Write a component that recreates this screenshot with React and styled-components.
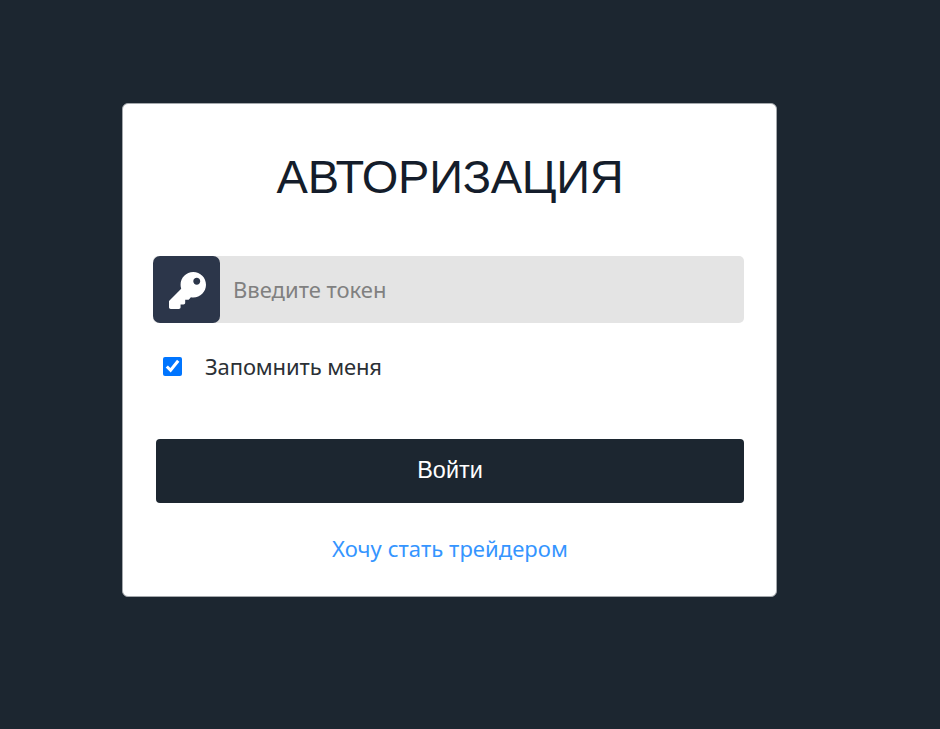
import React from 'react';
import styled, { createGlobalStyle } from 'styled-components';
import { FaKey } from 'react-icons/fa';

const GlobalStyle = createGlobalStyle`
  * {
    box-sizing: border-box;
  }
  body {
    margin: 0;
    background: #1c2630;
    font-family: 'Noto Sans', sans-serif;
  }
`;

const Page = styled.main`
  min-height: 100vh;
  padding: 103px 0 0 122px;
  overflow: hidden;
`;

const Card = styled.form`
  display: flex;
  flex-direction: column;
  width: 655px;
  height: 494px;
  padding: 0 32px 0 33px;
  border: 1px solid #a4a8ac;
  border-radius: 6px;
  background: #fff;
`;

const Title = styled.h1`
  margin: 45px 0 0;
  font-family: 'Liberation Sans', sans-serif;
  font-size: 47px;
  font-weight: 400;
  line-height: 56px;
  letter-spacing: -0.3px;
  text-align: center;
  white-space: nowrap;
  color: #141d2b;
`;

const Field = styled.div`
  display: flex;
  height: 67px;
  margin: 51px 0 0 -3px;
  border-radius: 5px;
  background: #e4e4e4;
`;

const FieldIcon = styled.label`
  display: flex;
  align-items: center;
  justify-content: center;
  width: 67px;
  height: 67px;
  padding: 1px 0 0 1px;
  border-radius: 7px;
  background: #2c364a;
  color: #fff;
  font-size: 37px;
`;

const Input = styled.input`
  flex: 1;
  min-width: 0;
  padding: 0 13px 1px;
  border: 0;
  outline: 0;
  background: transparent;
  font-family: 'Noto Sans', sans-serif;
  font-size: 22px;
  color: #212529;
  &::placeholder {
    color: #808080;
    opacity: 1;
  }
`;

const Remember = styled.label`
  display: flex;
  align-items: center;
  height: 32px;
  margin: 27px 0 0 7px;
  font-size: 22px;
  line-height: 32px;
  letter-spacing: -0.12px;
  color: #2b3035;
`;

const Checkbox = styled.input`
  width: 19px;
  height: 19px;
  margin: 0 23px 0 0;
  accent-color: #0075ff;
`;

const Submit = styled.button`
  height: 64px;
  margin: 57px 0 0;
  padding: 0 0 1px;
  border: 0;
  border-radius: 4px;
  background: #1c2630;
  font-family: 'Liberation Sans', sans-serif;
  font-size: 23.4px;
  color: #fff;
`;

const Link = styled.a`
  margin-top: 29px;
  font-size: 22px;
  line-height: 32px;
  letter-spacing: 0.07px;
  text-align: center;
  text-decoration: none;
  color: #3595ff;
`;

export default function App() {
  return (
    <Page>
      <GlobalStyle />
      <Card onSubmit={(e) => e.preventDefault()}>
        <Title>АВТОРИЗАЦИЯ</Title>
        <Field>
          <FieldIcon htmlFor="token">
            <FaKey />
          </FieldIcon>
          <Input id="token" type="text" placeholder="Введите токен" />
        </Field>
        <Remember>
          <Checkbox type="checkbox" defaultChecked />
          <span>Запомнить меня</span>
        </Remember>
        <Submit type="submit">Войти</Submit>
        <Link href="#">Хочу стать трейдером</Link>
      </Card>
    </Page>
  );
}
